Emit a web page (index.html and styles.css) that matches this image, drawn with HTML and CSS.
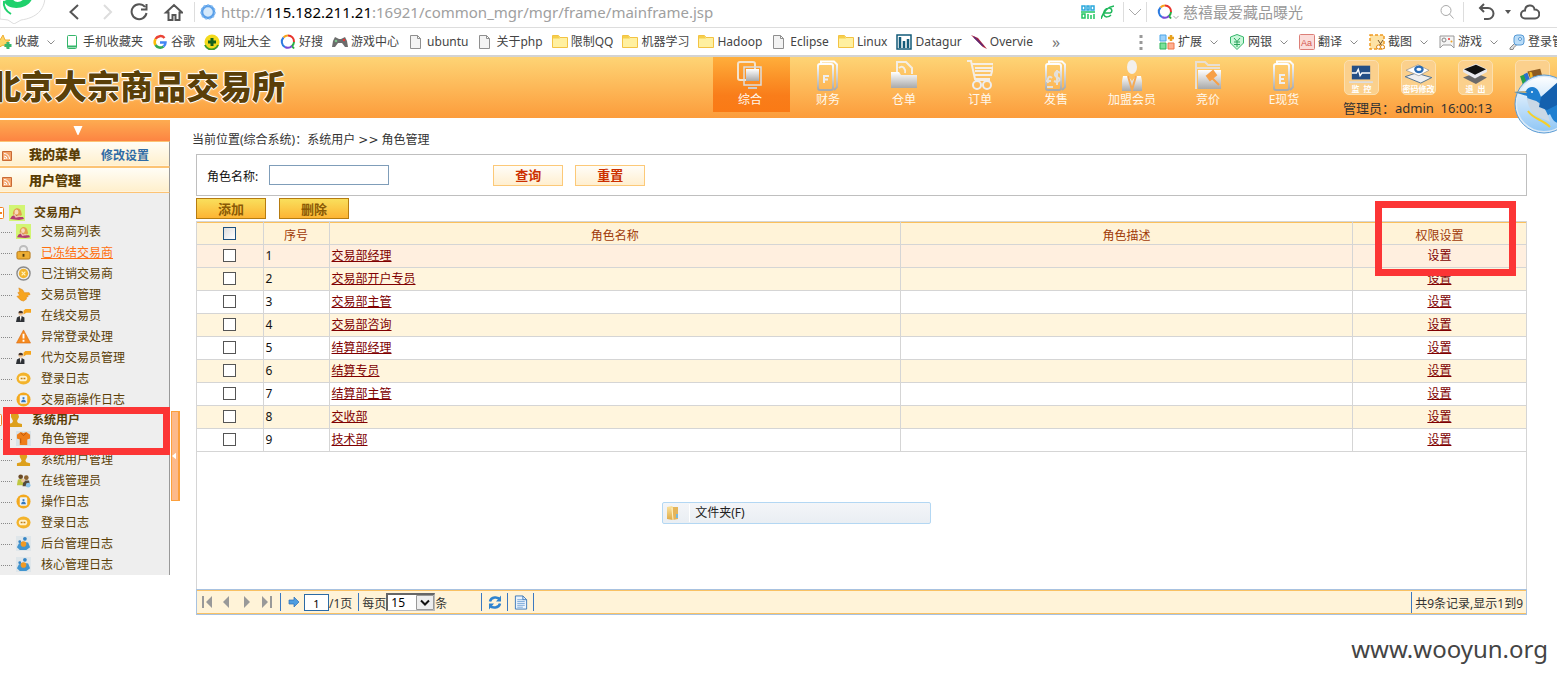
FILE: index.html
```html
<!DOCTYPE html>
<html lang="zh-CN">
<head>
<meta charset="utf-8">
<title>北京大宗商品交易所</title>
<link rel="stylesheet" href="styles.css">
</head>
<body>
<svg class="defs" aria-hidden="true">
  <defs>
    <linearGradient id="silver" x1="0" y1="0" x2="0" y2="1"><stop offset="0" stop-color="#fff"/><stop offset="1" stop-color="#a9a9a9"/></linearGradient>
    <linearGradient id="orb" x1="0" y1="0" x2="0" y2="1"><stop offset="0" stop-color="#ffffff"/><stop offset="1" stop-color="#8fc6f5"/></linearGradient>
    <linearGradient id="gold" x1="0" y1="0" x2="0" y2="1"><stop offset="0" stop-color="#fbe3a0"/><stop offset="1" stop-color="#e0ab45"/></linearGradient>
  </defs>
  <symbol id="page" viewBox="0 0 16 16"><path d="M2.500 1.500h7l3 3v10h-10zM9.500 1.500v3h3" fill="#f3f3f3" stroke="#8f8f8f"/></symbol>
  <symbol id="folder" viewBox="0 0 16 16"><path d="M.5 13.500v-12h6l1.500 2h7.500v10z" fill="#fff0a0" stroke="#f3c343"/><path d="M1 2h5.500L8 4.500H1z" fill="#f6cf4c"/></symbol>
  <symbol id="chev" viewBox="0 0 8 8"><path d="M.5 2.500L4 6l3.500-3.500" fill="none" stroke="#8c8c8c"/></symbol>
  <symbol id="ring" viewBox="0 0 16 16"><g fill="none" stroke-width="2"><path d="M3.500 3.500A6 6 0 0 1 8 1.500" stroke="#f7a520"/><path d="M8 1.500A6 6 0 0 1 14 8" stroke="#e8342c"/><path d="M14 8a6 6 0 0 1-2 4l2 2.500" stroke="#27ae45"/><path d="M12 12a6 6 0 0 1-7 1" stroke="#7a4bd6"/><path d="M5 13A6 6 0 0 1 3.500 3.500" stroke="#2c7be0"/></g></symbol>
  <symbol id="rss" viewBox="0 0 10 10"><path d="M.5.5h9v9h-9z" fill="#f3a268" stroke="#c96a35"/><path d="M2 2.500A5.500 5.500 0 0 1 7.500 8M2 5a3 3 0 0 1 3 3" stroke="#fff" fill="none"/><circle cx="2.800" cy="7.300" r=".9" fill="#fff"/></symbol>
  <symbol id="lady" viewBox="0 0 16 16"><path d="M0 0h16v16H0z" fill="#d2f573"/><path d="M4 10c-1-7 6-9 8-4l1 4-4 2z" fill="#e2a04e"/><ellipse cx="7.500" cy="7" rx="2" ry="2.500" fill="#f9d9bd"/><path d="M1 14l2-3 4-1 3 2 4 0 1 2-5 1z" fill="#b33a73"/><path d="M5 9l2 3 4-1" stroke="#edc5ab" stroke-width="1.500" fill="none"/></symbol>
  <symbol id="lock" viewBox="0 0 16 16"><path d="M4 8V5a4 4 0 0 1 8 0v3" fill="none" stroke="#bdbdbd" stroke-width="2"/><rect x="1" y="7" width="14" height="8" rx="1.500" fill="#edae35" stroke="#b57716"/><path d="M8 9.500v3" stroke="#4e3a10" stroke-width="2"/></symbol>
  <symbol id="coin" viewBox="0 0 16 16"><circle cx="8" cy="8" r="7" fill="#eee" stroke="#8b8b8b" stroke-width="1.500"/><circle cx="8" cy="8" r="5" fill="#f2b52e"/><path d="M6 6l4 4m0-4l-4 4" stroke="#fff3c2" stroke-width="1.300"/></symbol>
  <symbol id="hand" viewBox="0 0 16 16"><path d="M3 1l4 2 2 3h5l1 2-3 1 1 1-2 1 0 2-3 2-3-1-4-4 3-1-2-3 2-1z" fill="#f7a51f" stroke="#dd8613" stroke-width=".6"/></symbol>
  <symbol id="agent" viewBox="0 0 16 16"><path d="M8 3l2-2h6v4h-5l-3 2z" fill="#f6a51c"/><circle cx="5" cy="6" r="2.300" fill="#f0c69a"/><path d="M2.500 5.500a2.500 2.500 0 0 1 5 0" fill="#47352a"/><path d="M0 15l1-5 3-1.500 1 2 1-2 3 1.500v5z" fill="#2d3035"/><path d="M4 9l1 5 1-5z" fill="#fff"/></symbol>
  <symbol id="warn" viewBox="0 0 16 16"><path d="M8 1l7.500 14H.5z" fill="#f58a1f" stroke="#d7690f" stroke-width=".6"/><path d="M8 5v5M8 11.500v2" stroke="#fff" stroke-width="2"/></symbol>
  <symbol id="chat" viewBox="0 0 16 16"><ellipse cx="8" cy="8" rx="7.500" ry="6.500" fill="#f3b32b"/><rect x="3" y="5" width="9" height="6" rx="3" fill="#fff2cc"/><path d="M5 8h2m1 0h2" stroke="#c18017" stroke-width="1.500"/></symbol>
  <symbol id="log" viewBox="0 0 16 16"><circle cx="8" cy="8" r="7.500" fill="#f3a91e"/><rect x="4" y="3.500" width="8" height="9" rx="1.500" fill="#eaf3fb"/><path d="M8 5.500v2" stroke="#3577bd" stroke-width="2"/><path d="M5.500 11c0-4 5-4 5 0z" fill="#3577bd"/></symbol>
  <symbol id="user" viewBox="0 0 16 16"><path d="M4 1h7l1 4-2 4 1 2 4 1v3H1v-3l4-1 1-2-2-4z" fill="#dda01c"/></symbol>
  <symbol id="role" viewBox="0 0 16 16"><path d="M0 0h16v16H0z" fill="#d9e2e8"/><path d="M1 4l4-3 3 1 3-1 4 3 0 4-3 1v6H4V9L1 8z" fill="#ee7d1a"/><path d="M5 2l3 3 3-3M5 8v5" stroke="#b95308" fill="none"/></symbol>
  <symbol id="team" viewBox="0 0 16 16"><circle cx="5" cy="4" r="2.500" fill="#6b4b28"/><circle cx="11" cy="5" r="2.500" fill="#8c6330"/><path d="M1 13l1-6 6-1 0 7z" fill="#bfc640"/><path d="M7 14l1-6 6 0 1 6z" fill="#554a3c"/><circle cx="7.500" cy="8" r="2" fill="#eec79c"/><circle cx="13" cy="13" r="2.500" fill="#8ec5ec"/></symbol>
  <symbol id="sys" viewBox="0 0 16 16"><path d="M0 0h16v16H0z" fill="#dfe6ea"/><path d="M1 12l2-4 4-2 6 1 2 5-4 3H4z" fill="#4295cf"/><circle cx="8" cy="8.500" r="3" fill="#f19a24"/><circle cx="9.500" cy="3" r="2" fill="#3685c5"/><circle cx="4" cy="6" r="1.500" fill="#3685c5"/></symbol>
  <symbol id="doc" viewBox="0 0 26 32"><path d="M6 5V1.500h13l3 3V27l-3 3" fill="none" stroke="url(#silver)" stroke-width="2"/><rect x="3" y="4" width="15" height="26" rx="2" fill="none" stroke="url(#silver)" stroke-width="2"/></symbol>
</svg>

<header class="chrome">
  <svg class="brand" viewBox="0 0 46 24"><path d="M0 19l8 1 6 4 7-4C36 18 45 10 45-4H0z" fill="#fff" stroke="#ddd"/><path d="M4 1c3 10 24 9 28-2h-8c-4 4-10 4-12-1z" fill="#1fd16c"/><path d="M4 1c-1 6 2 10 7 13" fill="none" stroke="#1fd16c" stroke-width="2"/></svg>
  <button class="tool" aria-label="后退"><svg viewBox="0 0 20 20"><path d="M14 3l-7.500 7 7.500 7" fill="none" stroke="#555" stroke-width="2"/></svg></button>
  <button class="tool" aria-label="前进"><svg viewBox="0 0 20 20"><path d="M7 3l7 7-7 7" fill="none" stroke="#ddd" stroke-width="2"/></svg></button>
  <button class="tool" aria-label="刷新"><svg viewBox="0 0 20 20"><path d="M15 5a7.500 7.500 0 1 0 1.500 6M16.500 2v5.500h-5.500" fill="none" stroke="#555" stroke-width="2"/></svg></button>
  <button class="tool" aria-label="主页"><svg viewBox="0 0 20 20"><path d="M3 10.500L11 3l8 7.500h-2.500V18h-4v-5h-3v5h-4v-7.500z" fill="none" stroke="#555" stroke-width="2"/></svg></button>
  <i class="bar"></i>
  <svg class="site" viewBox="0 0 16 16"><circle cx="8" cy="8" r="6" fill="#d5e9fb" stroke="#5a9fe8" stroke-width="2.500"/><circle cx="8" cy="8" r="7" fill="none" stroke="#86bdf3" stroke-width="1.500" stroke-dasharray="2 2"/></svg>
  <p class="url">http://<b>115.182.211.21</b>:16921/common_mgr/mgr/frame/mainframe.jsp</p>
  <svg class="ic14" viewBox="0 0 14 14"><g fill="none" stroke-width="1.500"><path d="M1 1h3v4H1zM6 1h2v4H6zM10 1h3v4h-3z" stroke="#2aa8dc"/><path d="M1 9h3v4H1zM0 7h14M7 9v5M10 10v4M13 9v5" stroke="#20c563"/></g></svg>
  <svg class="ic14" viewBox="0 0 14 14"><path d="M2 8h7c3-1 2-5-1-5-4 0-6 4-5 7s5 2 7 0M0 14C2 7 6 2 13 1" fill="none" stroke="#20b85c" stroke-width="1.500"/></svg>
  <div class="drop"><svg viewBox="0 0 14 8"><path d="M1 1l6 6 6-6" fill="none" stroke="#aaa"/></svg></div>
  <div class="find">
    <svg class="ic16"><use href="#ring"/></svg><svg class="ic6"><use href="#chev"/></svg>
    <input class="find-text" aria-label="搜索" value="慈禧最爱藏品曝光">
    <svg class="ic16" viewBox="0 0 16 16"><circle cx="7" cy="6.500" r="5" fill="none" stroke="#aaa"/><path d="M10.500 10l4 4.500" stroke="#aaa"/></svg>
  </div>
  <div class="extra">
    <svg class="ic18" viewBox="0 0 18 18"><path d="M6 1L2 5l4 4M2 5h8a5 5 0 0 1 0 11H6" fill="none" stroke="#555" stroke-width="2"/></svg>
    <svg class="ic6" viewBox="0 0 6 6"><path d="M0 1h6L3 5z" fill="#555"/></svg>
    <svg class="cloud" viewBox="0 0 20 18"><path d="M5 15.500a4 4 0 0 1 0-8c0-6 9-7 9.500-1a4.500 4.500 0 0 1 .5 9z" fill="none" stroke="#555" stroke-width="2"/></svg>
  </div>
</header>

<nav class="marks">
  <a class="fav"><svg viewBox="0 0 16 16"><path d="M7 1l2 5h5l-4 3 2 5-5-3-5 3 1-5-4-3h5z" fill="#fdd668" stroke="#efae32"/><path d="M12 8v7M8.500 11.500h7" stroke="#38b76d" stroke-width="3"/></svg>收藏<svg class="chv"><use href="#chev"/></svg></a>
  <a><svg viewBox="0 0 16 16"><rect x="3.500" y="1.500" width="9" height="13" rx="1" fill="#fff" stroke="#35b66b"/><path d="M4 12.500h8" stroke="#35b66b" stroke-width="2"/></svg>手机收藏夹</a>
  <a><svg viewBox="0 0 16 16"><g fill="none" stroke-width="2.500"><path d="M12.500 4A5.500 5.500 0 0 0 3.500 5" stroke="#ea4335"/><path d="M3.500 5a6 6 0 0 0 0 6" stroke="#fbbc05"/><path d="M3.500 11a5.500 5.500 0 0 0 8 1.500" stroke="#34a853"/><path d="M11.500 12.500c2-1.500 2-3 2-4H8" stroke="#4285f4"/></g></svg>谷歌</a>
  <a><svg viewBox="0 0 16 16"><circle cx="8" cy="8" r="7.500" fill="#f3da1d"/><path d="M1 11a7 7 0 0 0 13 0" fill="none" stroke="#3e9a29" stroke-width="2"/><path d="M8 4v8M4 8h8" stroke="#13601c" stroke-width="3"/></svg>网址大全</a>
  <a><svg><use href="#ring"/></svg>好搜</a>
  <a><svg viewBox="0 0 16 16"><path d="M3 3l4 2h2l4-2 2 4 1 6-3 0-3-4H6l-3 4H0l1-6z" fill="#6c6c6c"/><circle cx="12" cy="6" r="1.200" fill="#e33"/><circle cx="4" cy="7" r="1.300" fill="#7cc48a"/></svg>游戏中心</a>
  <a><svg><use href="#page"/></svg>ubuntu</a>
  <a><svg><use href="#page"/></svg>关于php</a>
  <a><svg><use href="#folder"/></svg>限制QQ</a>
  <a><svg><use href="#folder"/></svg>机器学习</a>
  <a><svg><use href="#folder"/></svg>Hadoop</a>
  <a><svg><use href="#page"/></svg>Eclipse</a>
  <a><svg><use href="#folder"/></svg>Linux</a>
  <a><svg viewBox="0 0 16 16"><path d="M1 1h14v14H1z" fill="#fff" stroke="#135b7a" stroke-width="1.500"/><path d="M4 3v11M8 7v7M12 5v9" stroke="#135b7a" stroke-width="2.500"/></svg>Datagur</a>
  <a><svg viewBox="0 0 16 16"><path d="M0 1l7 3 9 11-4-2z" fill="#a8213f"/><path d="M3 3l9 9" stroke="#5b2a78" stroke-width="1.500"/></svg>Overvie</a>
  <span class="more">»</span>
  <div class="addons">
    <svg class="dots" viewBox="0 0 4 16"><path d="M.5 1h3v3h-3zM.5 7h3v3h-3zM.5 13h3v3h-3z" fill="#999"/></svg>
    <a><svg viewBox="0 0 16 16"><path d="M1 1h6v6H1z" fill="#9cd1fa" stroke="#4ca6e8"/><path d="M1 9h6v6H1z" fill="#7be09b" stroke="#2eb45a"/><path d="M9 9h6v6H9z" fill="#ffb090" stroke="#f0764a"/><path d="M12 1v6M9 4h6" stroke="#e8a11d" stroke-width="2.500"/></svg>扩展<svg class="chv"><use href="#chev"/></svg></a>
    <a><svg viewBox="0 0 16 16"><path d="M8 .5l6.500 2.500v6L8 15.500 1.500 9V3z" fill="#c9f7da" stroke="#37b76b"/><path d="M5 4l3 3.500L11 4M8 7.500V13M5 8h6M5 10.500h6" fill="none" stroke="#2aa35b"/></svg>网银<svg class="chv"><use href="#chev"/></svg></a>
    <a><svg viewBox="0 0 16 16"><rect x=".5" y=".5" width="15" height="15" rx="1" fill="#fbdcd9" stroke="#dc7f78"/><text x="2" y="12" class="aa">Aa</text></svg>翻译<svg class="chv"><use href="#chev"/></svg></a>
    <a><svg viewBox="0 0 16 16"><path d="M1 1h14v14H1z" fill="#fde2a5" stroke="#ef9a22" stroke-width="1.500" stroke-dasharray="3 2"/><path d="M9 6l4 6M14 6l-4 6" stroke="#75542c"/><circle cx="9.500" cy="13" r="2" fill="#fff" stroke="#e08a1a"/><circle cx="13.500" cy="13" r="2" fill="#fff" stroke="#e08a1a"/></svg>截图<svg class="chv"><use href="#chev"/></svg></a>
    <a><svg viewBox="0 0 16 16"><path d="M1 2h14v12l-3-3H4l-3 3z" fill="#f5f5f5" stroke="#999"/><circle cx="5" cy="6" r="2" fill="none" stroke="#888"/><circle cx="10" cy="5" r="1" fill="#e33"/><circle cx="12.500" cy="7.500" r="1" fill="#f1a11f"/></svg>游戏<svg class="chv"><use href="#chev"/></svg></a>
    <a><svg viewBox="0 0 16 16"><path d="M6 9l-5 5v1.500h3l1-2 3-3" fill="#ddd" stroke="#888"/><rect x="5" y="1" width="10" height="10" rx="3" fill="#b9dcf8" stroke="#5598d3"/><circle cx="11" cy="5" r="1.500" fill="#fff" stroke="#5598d3"/></svg>登录管</a>
  </div>
</nav>

<header class="banner">
  <h1>北京大宗商品交易所</h1>
  <nav class="modules">
    <a class="on"><svg viewBox="0 0 26 32"><rect x="1" y="2" width="17" height="18" rx="2" fill="none" stroke="#f4e3cb" stroke-width="2"/><path d="M7 7h17v18H7z" fill="none" stroke="#ddd" stroke-width="1.500"/><path d="M9 9h13v12H9z" fill="url(#silver)"/><path d="M11 28h9" stroke="#ccc" stroke-width="2"/></svg>综合</a>
    <a><svg viewBox="0 0 26 32"><use href="#doc"/><path d="M9 23v-7h5M9 19.500h4" fill="none" stroke="#eee" stroke-width="2"/></svg>财务</a>
    <a><svg viewBox="0 0 26 32"><path d="M6 14V2h9l6 6v6M8 8c4-4 7 2 6 5" fill="none" stroke="#f4eee4" stroke-width="2"/><path d="M0 28V12h8l2 3h16v13z" fill="url(#silver)"/></svg>仓单</a>
    <a><svg viewBox="0 0 26 32"><path d="M-1 1h5l4 18h15M5 4h22l-3 11H8M8 8h18M8 11h16M8 20h15" fill="none" stroke="#f6eee4" stroke-width="2"/><circle cx="10" cy="25" r="4" fill="none" stroke="#eee" stroke-width="2"/><circle cx="20" cy="25" r="4" fill="none" stroke="#eee" stroke-width="2"/></svg>订单</a>
    <a><svg viewBox="0 0 26 32"><use href="#doc"/><path d="M17 13c-5-4-7 3-3 4s3 7-3 4M14 10v15M9 18c-3-3-5 0-4 5M3 21h5M4 27h6" fill="none" stroke="#e4e0da" stroke-width="2"/></svg>发售</a>
    <a><svg viewBox="0 0 26 32"><ellipse cx="13" cy="7" rx="5" ry="7" fill="#f3f0ec"/><path d="M3 31V21l1-5h5l4 5 4-5h5l1 5v10z" fill="url(#silver)"/><path d="M9 16l4 14 4-14" fill="none" stroke="#f5aa55" stroke-width="2"/></svg>加盟会员</a>
    <a><svg viewBox="0 0 26 32"><path d="M1 29V2h9l3 3h12M1 8h24" fill="none" stroke="#e8dfd4" stroke-width="2"/><path d="M3 10h23v19H3z" fill="url(#silver)"/><path d="M12 16l6-5 3 4-6 5zM17 18l7 7" stroke="#f7a046" stroke-width="2" fill="#f7a046"/></svg>竞价</a>
    <a><svg viewBox="0 0 26 32"><use href="#doc"/><path d="M14 15H9v8h5M9 19h4" fill="none" stroke="#eee" stroke-width="2"/></svg>E现货</a>
  </nav>
  <div class="account">
    <div class="quick">
      <button><svg viewBox="0 0 32 24"><path d="M6 4h20v15H6z" fill="#244f86"/><path d="M6 12h5l2-4 2 7 2-3h9" fill="none" stroke="#fff" stroke-width="1.500"/><path d="M3 22h26" stroke="#ddd" stroke-width="2"/></svg>监&nbsp; 控</button>
      <button><svg viewBox="0 0 32 24"><path d="M2 16l12-4 17 5-12 6z" fill="#efefef" stroke="#486b8e"/><path d="M3 9l13-6 12 6-11 6z" fill="#fff" stroke="#888" stroke-width=".7"/><ellipse cx="17" cy="8" rx="4" ry="3" fill="none" stroke="#2b6cb4" stroke-width="2.500"/></svg>密码修改</button>
      <button><svg viewBox="0 0 32 24"><path d="M3 17l13-5 13 5-12 7z" fill="#6b6a6a"/><path d="M3 8l14-6 12 6v3l-13 7L3 11z" fill="#e9e9ee"/><path d="M4 8l13-5 11 5-12 6z" fill="#111"/></svg>退&nbsp; 出</button>
      <button aria-label="工具"><svg viewBox="0 0 32 24"><path d="M11 5l14-3 3 11-13 2z" fill="#8c5a20"/><path d="M3 10l5-2 3 12-4 2z" fill="#28a04b"/><path d="M7 8l4-2 4 12-4 2z" fill="#2b6fd0"/><path d="M13 5l3 1 2 10-3 1z" fill="#f2b525"/></svg></button>
    </div>
    <p>管理员<span class="colon">：</span>admin&nbsp; 16:00:13</p>
  </div>
  <svg class="bird" viewBox="0 0 60 60"><circle cx="30" cy="30" r="28" fill="url(#orb)" stroke="#dbeaf7" stroke-width="2"/><circle cx="30" cy="30" r="29" fill="none" stroke="#5a9bd4"/><path d="M0 18l12-1c2-5 10-6 13 1l2 5c7-5 13-12 20-16v42C40 50 38 44 36 40l-6 4C22 40 14 32 13 22z" fill="#1f7fd0"/><path d="M13 24c1 12 8 18 19 22l4 2c-2-10-8-20-17-22z" fill="#c9d8e6"/><path d="M14 37c5 8 14 8 22 16" fill="none" stroke="#f6cf2a" stroke-width="2"/><path d="M27 23l-2 10 8 3 12-6V7z" fill="#1460ae"/><circle cx="18" cy="18" r="1" fill="#fff"/><path d="M0 18l11-1 2 2z" fill="#d8b674"/></svg>
</header>

<div class="body">
  <aside class="side">
    <button class="fold" aria-label="收起"><svg viewBox="0 0 10 10"><path d="M0 0h10L5.500 10h-1z" fill="#fff"/></svg></button>
    <div class="head"><svg><use href="#rss"/></svg><b>我的菜单</b><a class="edit">修改设置</a></div>
    <div class="head"><svg><use href="#rss"/></svg><b>用户管理</b></div>
    <div class="tree">
      <div class="group"><svg class="minus" viewBox="0 0 12 12"><rect x=".5" y=".5" width="11" height="11" rx="1" fill="#fff" stroke="#f08020"/><path d="M3 6h7" stroke="#f08020" stroke-width="2"/></svg><svg class="ic16"><use href="#lady"/></svg>交易用户</div>
      <a><svg><use href="#lady"/></svg>交易商列表</a>
      <a class="hot"><svg><use href="#lock"/></svg>已冻结交易商</a>
      <a><svg><use href="#coin"/></svg>已注销交易商</a>
      <a><svg><use href="#hand"/></svg>交易员管理</a>
      <a><svg><use href="#agent"/></svg>在线交易员</a>
      <a><svg><use href="#warn"/></svg>异常登录处理</a>
      <a><svg><use href="#agent"/></svg>代为交易员管理</a>
      <a><svg><use href="#chat"/></svg>登录日志</a>
      <a><svg><use href="#log"/></svg>交易商操作日志</a>
      <div class="group admin"><svg class="minus" viewBox="0 0 12 12"><rect x=".5" y=".5" width="11" height="11" rx="1" fill="#fff" stroke="#f08020"/><path d="M3 6h7" stroke="#f08020" stroke-width="2"/></svg><svg class="ic16"><use href="#user"/></svg>系统用户</div>
      <a><svg><use href="#role"/></svg>角色管理</a>
      <a><svg><use href="#user"/></svg>系统用户管理</a>
      <a><svg><use href="#team"/></svg>在线管理员</a>
      <a><svg><use href="#log"/></svg>操作日志</a>
      <a><svg><use href="#chat"/></svg>登录日志</a>
      <a><svg><use href="#sys"/></svg>后台管理日志</a>
      <a><svg><use href="#sys"/></svg>核心管理日志</a>
    </div>
    <div class="mark mark-menu"></div>
  </aside>
  <button class="slide" aria-label="隐藏菜单"><svg viewBox="0 0 5 8"><path d="M5 0v8L0 4z" fill="#fff"/></svg></button>

  <main>
    <p class="crumb">当前位置(综合系统)<span class="colon">：</span>系统用户 <span class="sep">&gt;&gt;</span> 角色管理</p>
    <form class="query">
      <label for="role-name">角色名称:</label><input id="role-name" type="text">
      <button type="button">查询</button><button type="button">重置</button>
    </form>
    <div class="actions"><button>添加</button><button>删除</button></div>
    <section class="grid">
      <table>
        <colgroup><col class="c-check"><col class="c-num"><col class="c-name"><col class="c-desc"><col></colgroup>
        <thead><tr><th><input type="checkbox" aria-label="全选"></th><th>序号</th><th>角色名称</th><th>角色描述</th><th>权限设置</th></tr></thead>
        <tbody>
          <tr class="over"><td><input type="checkbox" aria-label="选择1"></td><td>1</td><td><a href="#">交易部经理</a></td><td></td><td><a href="#">设置</a></td></tr>
          <tr><td><input type="checkbox" aria-label="选择2"></td><td>2</td><td><a href="#">交易部开户专员</a></td><td></td><td><a href="#">设置</a></td></tr>
          <tr><td><input type="checkbox" aria-label="选择3"></td><td>3</td><td><a href="#">交易部主管</a></td><td></td><td><a href="#">设置</a></td></tr>
          <tr><td><input type="checkbox" aria-label="选择4"></td><td>4</td><td><a href="#">交易部咨询</a></td><td></td><td><a href="#">设置</a></td></tr>
          <tr><td><input type="checkbox" aria-label="选择5"></td><td>5</td><td><a href="#">结算部经理</a></td><td></td><td><a href="#">设置</a></td></tr>
          <tr><td><input type="checkbox" aria-label="选择6"></td><td>6</td><td><a href="#">结算专员</a></td><td></td><td><a href="#">设置</a></td></tr>
          <tr><td><input type="checkbox" aria-label="选择7"></td><td>7</td><td><a href="#">结算部主管</a></td><td></td><td><a href="#">设置</a></td></tr>
          <tr><td><input type="checkbox" aria-label="选择8"></td><td>8</td><td><a href="#">交收部</a></td><td></td><td><a href="#">设置</a></td></tr>
          <tr><td><input type="checkbox" aria-label="选择9"></td><td>9</td><td><a href="#">技术部</a></td><td></td><td><a href="#">设置</a></td></tr>
        </tbody>
      </table>
      <div class="mark mark-perm"></div>
      <div class="popup"><svg viewBox="0 0 16 16"><path d="M2 2l5-1 1 1v13l-6-1z" fill="url(#gold)"/><path d="M8 2h5v12l-5 1z" fill="#e5b55a"/><path d="M7 3l1 12" stroke="#fff2c4"/><path d="M12 9v4" stroke="#78b9dc" stroke-width="2"/></svg><span>文件夹(F)</span></div>
    </section>
    <footer class="pager">
      <button class="p" aria-label="首页"><svg viewBox="0 0 12 12"><path d="M1 0h2v12H1zM11 0v12L5 6z" fill="#999"/></svg></button>
      <button class="p" aria-label="上一页"><svg viewBox="0 0 12 12"><path d="M8 0v12L2 6z" fill="#999"/></svg></button>
      <button class="p" aria-label="下一页"><svg viewBox="0 0 12 12"><path d="M3 0v12l6-6z" fill="#999"/></svg></button>
      <button class="p" aria-label="末页"><svg viewBox="0 0 12 12"><path d="M9 0h2v12H9zM1 0v12l6-6z" fill="#999"/></svg></button>
      <i></i>
      <button class="p" aria-label="跳转"><svg viewBox="0 0 12 12"><path d="M1 4h5V1l5 5-5 5V8H1z" fill="#4f9de0" stroke="#2b6fb5" stroke-width=".7"/></svg></button>
      <span class="jump"><input type="text" value="1" aria-label="页码"><span class="txt">/1页</span></span>
      <i></i>
      <label class="size"><span class="txt">每页</span><span class="pick"><select><option>15</option></select><svg viewBox="0 0 18 15"><path d="M.5.5h17v14H.5z" fill="#eee" stroke="#999"/><path d="M5 5.500l4 4 4-4" fill="none" stroke="#111" stroke-width="2"/></svg></span><span class="txt">条</span></label>
      <i></i>
      <button class="r" aria-label="刷新列表"><svg viewBox="0 0 14 14"><path d="M2 6c1-5 8-5 10-2M12 8c-1 5-8 5-10 2" fill="none" stroke="#2f83cf" stroke-width="2.500"/><path d="M13 0v6H8zM1 14V8h5z" fill="#2f83cf"/></svg></button>
      <i></i>
      <button class="r" aria-label="导出"><svg viewBox="0 0 14 16"><path d="M1 1h8l4 4v10H1z" fill="#eaf3fd" stroke="#3b78ba"/><path d="M3 5h6M3 7h8M3 9h8M3 11h8M3 13h6" stroke="#7aa7d8"/><path d="M9 1v4h4" fill="none" stroke="#3b78ba"/></svg></button>
      <i></i>
      <span class="total"><span class="txt">共9条记录,显示1到9</span></span>
    </footer>
  </main>
</div>
<p class="stamp">www.wooyun.org</p>
</body>
</html>
```
FILE: styles.css
```css
* { box-sizing: border-box; }
html { overflow: hidden; }
body, p, h1 { margin: 0; }
body { font: 12px/18px "Noto Sans", "Noto Sans CJK SC", sans-serif; color: #333; background: #fff; overflow: hidden; }
button { padding: 0; border: 0; background: none; font: inherit; color: inherit; }
svg { flex: none; display: block; }
.defs { position: absolute; width: 0; height: 0; }
.ic6 { width: 6px; height: 6px; }
.ic14 { width: 14px; height: 14px; }
.ic16 { width: 16px; height: 16px; }
.ic18 { width: 18px; height: 18px; }
.colon { font-family: "Noto Sans CJK TC", sans-serif; }
.sep { font-family: "DejaVu Sans", sans-serif; }

/* browser toolbar */
.chrome { display: flex; align-items: center; height: 28px; padding-bottom: 4px; border-bottom: 1px solid #ddd; }
.brand { width: 46px; height: 24px; margin-right: 18px; }
.tool { width: 20px; height: 22px; margin-right: 13px; }
.tool svg { width: 20px; height: 20px; }
.tool + .bar { margin-right: 5px; margin-left: -2px; }
.bar { width: 1px; height: 20px; background: #ddd; }
.site { width: 16px; height: 16px; margin-right: 5px; }
.url { flex: 1; font-size: 15px; line-height: 22px; color: #a0a0a0; white-space: nowrap; overflow: hidden; }
.url b { font-weight: 400; color: #000; }
.chrome > .ic14 { margin-right: 6px; }
.drop { display: flex; align-items: center; justify-content: center; width: 24px; height: 20px; margin-left: 2px; border: solid #ddd; border-width: 0 1px; }
.drop svg { width: 14px; height: 8px; }
.find { display: flex; align-items: center; width: 317px; height: 20px; padding: 0 8px 0 10px; border-right: 1px solid #ddd; }
.find .ic6 { margin-top: 10px; }
.find-text { flex: 1; min-width: 0; padding: 0 4px; border: 0; font: 15px/20px "Noto Sans CJK SC", sans-serif; color: #999; background: none; }
.extra { display: flex; align-items: center; gap: 9px; width: 93px; padding-left: 14px; }
.cloud { width: 20px; height: 18px; }

/* bookmarks */
.marks { display: flex; align-items: center; height: 29px; padding-top: 1px; border-bottom: 2px solid #d3d3d3; color: #444; white-space: nowrap; overflow: hidden; }
.marks a { display: flex; align-items: center; gap: 3px; margin-right: 9px; }
.marks svg { width: 16px; height: 16px; }
.marks .chv { width: 8px; height: 8px; margin-left: 5px; }
.marks .fav { margin-left: -4px; }
.more { margin-left: 10px; font-size: 16px; color: #777; }
.addons { display: flex; align-items: center; width: 418px; margin-left: auto; }
.addons .dots { width: 4px; height: 16px; margin-right: 16px; }
.addons a { flex: none; width: 61px; }
.aa { font: 9px "Liberation Sans", sans-serif; fill: #d4564d; }

/* banner */
.banner { position: relative; display: flex; height: 61px; background: linear-gradient(#fed475, #fc9c3b); }
.banner h1 { flex: 1; margin-left: -12px; font: 900 33px/56px "Noto Sans CJK SC", sans-serif; color: #5a3f08; white-space: nowrap; text-shadow: 1px 0 #fff, -1px 0 #fff, 0 1px #fff, 0 -1px #fff, 0 0 3px #fff; }
.modules { display: flex; width: 630px; }
.modules a { display: flex; flex-direction: column; align-items: center; width: 76px; height: 55px; padding-top: 3px; color: #fff8ec; line-height: 14px; }
.modules a svg { width: 26px; height: 32px; margin-bottom: 1px; }
.modules .on { width: 77px; padding-right: 3px; background: linear-gradient(#ffae3b, #fb9127 40%, #f97d1a 70%, #fa7a15); }
.account { width: 214px; padding-top: 3px; }
.quick { display: flex; gap: 22px; margin-left: 1px; }
.quick button { flex: none; width: 35px; height: 35px; border-radius: 5px; background: #fbd08c; border: 1px solid #fbdfae; color: #fff; font-size: 8px; line-height: 10px; white-space: nowrap; font-weight: 700; }
.quick svg { width: 32px; height: 22px; }
.account p { margin-top: 3px; font-size: 13px; line-height: 20px; white-space: nowrap; }
.bird { position: absolute; right: -17px; top: 17px; width: 60px; height: 60px; }

/* sidebar */
.body { display: flex; align-items: flex-start; padding-top: 2px; }
.side { position: relative; flex: none; width: 170px; }
.fold { display: flex; align-items: center; justify-content: center; width: 100%; height: 21px; padding-right: 15px; background: linear-gradient(#fdac51, #fd8442); }
.fold svg { width: 10px; height: 9px; }
.head { display: flex; align-items: center; height: 26px; border: solid #fcc374; border-width: 1px 0; border-right: 1px solid #999; background: linear-gradient(#fffdf6, #ffefcb); font-weight: 700; color: #5a3d05; box-shadow: inset 0 -1px #fff3dc; line-height: 22px; }
.head b { font-size: 13px; }
.head svg { width: 10px; height: 10px; margin: 3px 17px 0 2px; }
.head .edit { margin-left: 20px; padding-top: 3px; color: #2f6ba5; }
.tree { padding: 10px 0 0; background: #eee; border-right: 1px solid #999; color: #5a3d05; }
.group { display: flex; align-items: center; height: 18px; padding-top: 1px; font-weight: 700; margin-left: -8px; }
.group .ic16 { margin: 0 9px 0 5px; }
.admin { margin-left: -10px; }
.minus { width: 12px; height: 12px; }
.tree a { display: flex; align-items: center; height: 21px; }
.tree a::before { content: ""; width: 11px; margin: 2px 4px 0 1px; border-top: 1px dotted #888; }
.tree a svg { width: 15px; height: 15px; margin-right: 10px; }
.tree .hot { color: #ff7010; text-decoration: underline; }
.slide { flex: none; display: flex; align-items: center; width: 9px; height: 90px; margin: 291px 0 0 1px; background: #fdb98a; border: 1px solid #fca03c; border-right-width: 2px; }
.slide svg { width: 4px; height: 8px; }
.mark { position: absolute; border: 7px solid #fc3535; }
.mark-menu { left: 3px; top: 287px; width: 167px; height: 48px; }

/* content */
main { flex: 1; min-width: 0; padding: 9px 30px 0 16px; }
.crumb { margin-left: -4px; padding: 1px 0 5px; }
.query { display: flex; align-items: center; height: 42px; padding-left: 10px; border: 1px solid #bfbfbf; color: #111; }
.query label { padding-top: 3px; }
.query input { width: 120px; height: 20px; margin: 0 104px 0 11px; border: 1px solid #7f9db9; }
.query button { width: 70px; height: 21px; margin-right: 12px; border: 1px solid #fcc978; background: linear-gradient(#fffdf8, #ffefd0); color: #cc3000; font-weight: 700; font-size: 13px; line-height: 18px; }
.actions { display: flex; gap: 13px; padding: 2px 0; }
.actions button { width: 70px; height: 21px; border: 1px solid #b67c10; background: linear-gradient(#f9df5c, #fdb433); color: #8a5a05; font-weight: 700; font-size: 13px; line-height: 18px; }
.grid { position: relative; height: 368px; border: 1px solid #d5d5d5; border-bottom: 0; }
table { width: 100%; table-layout: fixed; border-collapse: collapse; }
.c-check { width: 66px; }
.c-num { width: 66px; }
.c-name { width: 43%; }
.c-desc { width: 34%; }
th, td { height: 23px; padding: 0 2px; border: 1px solid #d5d5d5; border-top: 0; line-height: 18px; text-align: left; font-weight: 400; }
th:first-child, td:first-child { border-left: 0; text-align: center; }
th:last-child, td:last-child { border-right: 0; text-align: center; }
th { height: 22px; padding-top: 6px; line-height: 15px; text-align: center; color: #a03a08; background: #fff3d8; box-shadow: inset 0 1px #fbc05c; }
td { color: #111; }
td a { color: #800000; }
tbody tr:nth-child(even) { background: #fff5dd; }
tbody .over { background: #ffefdf; }
.over td:last-child a { text-decoration: none; }
[type=checkbox] { appearance: none; display: block; width: 13px; height: 13px; margin: 0 auto; border: 1px solid #555; background: #fff; }
th [type=checkbox] { margin: -5px auto 0; border-color: #1c5180; background: linear-gradient(135deg, #ddd, #fff); }
.mark-perm { right: 10px; top: -21px; width: 141px; height: 75px; }
.popup { position: absolute; left: 35%; top: 280px; display: flex; align-items: center; width: 269px; height: 22px; padding-left: 2px; border: 1px solid #b3d7f3; border-radius: 2px; background: linear-gradient(#f3f5f8, #e9eef3); color: #222; }
.popup svg { width: 16px; height: 16px; }
.popup span { margin-left: 8px; padding-left: 5px; border-left: 1px solid #fff; }

/* pager */
.pager { display: flex; align-items: center; height: 26px; padding-left: 4px; border: 1px solid #a8c2e0; background: #fff3d8; box-shadow: inset 0 1px #f9c163, inset 0 -1px #f9c163; white-space: nowrap; }
.pager i { width: 1px; height: 18px; background: #3b78c0; }
.txt { padding-top: 3px; }
.p { width: 12px; height: 12px; margin-right: 8px; }
.p + i { margin: 0 7px 0 -1px; }
.p svg { width: 12px; height: 12px; }
.p:nth-of-type(5) { margin-right: 4px; }
.jump { display: flex; align-items: center; margin-right: 6px; }
.jump input { width: 25px; height: 17px; padding: 2px 0 0; border: 1px solid #2b6aa5; text-align: center; font: 11px/14px "Noto Sans", sans-serif; background: #fff; }
.size { display: flex; align-items: center; margin: 0 34px 0 3px; }
.pick { position: relative; width: 49px; height: 18px; }
.pick select { appearance: none; display: block; width: 49px; height: 18px; padding: 0 3px; border: 1px solid #bbb; border-top: 2px solid #666; border-left: 2px solid #666; border-radius: 0; background: #fff; font: 12px/14px "Noto Sans", sans-serif; color: #000; }
.pick svg { position: absolute; right: 1px; top: 2px; width: 18px; height: 15px; }
.r { margin: 0 5px 0 6px; }
.r svg { width: 14px; height: 15px; }
.total { display: flex; margin-left: auto; padding: 0 3px; border-left: 1px solid #3b78c0; }

.stamp { padding: 14px 9px 0 0; text-align: right; font-size: 24px; line-height: 40px; color: #444; }
```
